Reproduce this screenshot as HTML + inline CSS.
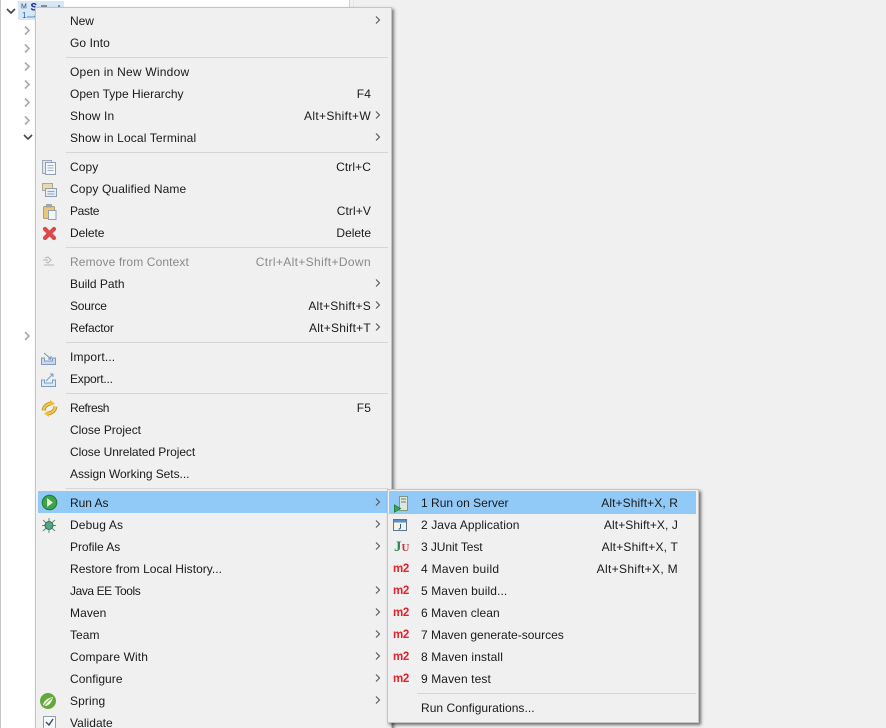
<!DOCTYPE html>
<html><head><meta charset="utf-8">
<style>
html,body{margin:0;padding:0;overflow:hidden}
body{width:886px;height:728px;position:relative;background:#f0f0f0;font-family:"Liberation Sans","Noto Sans CJK KR",sans-serif;font-size:12px;color:#1a1a1a}
div,svg{position:absolute}
.t{height:18px;line-height:18px;white-space:nowrap;letter-spacing:.08px}
.k{height:18px;line-height:18px;white-space:nowrap;text-align:right;letter-spacing:.33px}
.c{letter-spacing:.1px}
.sep{height:1px;background:#d5d5d5}
.m2{font:bold 11.5px/14px "Liberation Sans",sans-serif;color:#e8202a;left:393px;letter-spacing:-.4px}
</style></head><body>
<!-- tree panel -->
<div style="left:0;top:0;width:1px;height:728px;background:#c8c8c8"></div>
<div style="left:1px;top:0;width:348px;height:728px;background:#fff"></div>
<div style="left:349px;top:0;width:1px;height:728px;background:#d0d0d0"></div>
<div style="left:353px;top:0;width:1px;height:728px;background:#e4e4e4"></div>
<div style="left:18px;top:1px;width:46px;height:19px;background:#d5e8f8"></div>
<svg style="left:0;top:0" width="40" height="345" fill="none" stroke="#666" stroke-width="1.6">
<path d="M7 9l4 4 4-4" stroke="#444"/>
<path d="M25 26.500l4 4-4 4M25 44.500l4 4-4 4M25 62.500l4 4-4 4M25 80.500l4 4-4 4M25 98.500l4 4-4 4M25 116.500l4 4-4 4" stroke="#aaa"/>
<path d="M24 135l4 4 4-4" stroke="#444"/>
<path d="M25 332l4 4-4 4" stroke="#aaa"/>
</svg>
<svg style="left:20px;top:2px" width="42" height="18" fill="none">
<text x="1" y="6.500" font-size="7" font-family="Liberation Sans" fill="#345">M</text>
<text x="10.500" y="8.500" font-size="11" font-weight="bold" font-family="Liberation Mono" fill="#1a2aa0">S</text>
<text x="2" y="16" font-size="8" font-family="Liberation Sans" fill="#26a">1</text>
<path d="M7 15h7l2-2" stroke="#5a8abf"/>
<path d="M21 4h6M38 4h2" stroke="#333"/>
</svg>

<!-- main menu -->
<div style="left:35px;top:7px;width:355px;height:740px;background:#f0f0f0;border:1px solid #c4c4c4;box-shadow:2px 2px 3px rgba(0,0,0,.5)"></div>
<div style="left:38px;top:491px;width:350px;height:22px;background:#91c9f7"></div>

<div class="t" style="left:70px;top:12px;letter-spacing:-.05px">New</div>
<div class="t" style="left:70px;top:34px">Go Into</div>
<div class="sep" style="left:66px;top:57px;width:322px"></div>
<div class="t" style="left:70px;top:63px;letter-spacing:.22px">Open in New Window</div>
<div class="t" style="left:70px;top:85px;letter-spacing:.02px">Open Type Hierarchy</div>
<div class="t" style="left:70px;top:107px;letter-spacing:.14px">Show In</div>
<div class="t" style="left:70px;top:129px;letter-spacing:.14px">Show in Local Terminal</div>
<div class="sep" style="left:66px;top:152px;width:322px"></div>
<div class="t" style="left:70px;top:158px">Copy</div>
<div class="t" style="left:70px;top:180px;letter-spacing:.12px">Copy Qualified Name</div>
<div class="t" style="left:70px;top:202px;letter-spacing:-.32px">Paste</div>
<div class="t" style="left:70px;top:224px;letter-spacing:-.05px">Delete</div>
<div class="sep" style="left:66px;top:247px;width:322px"></div>
<div class="t" style="left:70px;top:253px;color:#8a8a8a;letter-spacing:.12px">Remove from Context</div>
<div class="t" style="left:70px;top:275px;letter-spacing:-.02px">Build Path</div>
<div class="t" style="left:70px;top:297px;letter-spacing:-.22px">Source</div>
<div class="t" style="left:70px;top:319px;letter-spacing:-.22px">Refactor</div>
<div class="sep" style="left:66px;top:342px;width:322px"></div>
<div class="t" style="left:70px;top:348px;letter-spacing:.14px">Import...</div>
<div class="t" style="left:70px;top:370px;letter-spacing:-.22px">Export...</div>
<div class="sep" style="left:66px;top:393px;width:322px"></div>
<div class="t" style="left:70px;top:399px;letter-spacing:-.43px">Refresh</div>
<div class="t" style="left:70px;top:421px;letter-spacing:-.03px">Close Project</div>
<div class="t" style="left:70px;top:443px;letter-spacing:-.07px">Close Unrelated Project</div>
<div class="t" style="left:70px;top:465px;letter-spacing:-.05px">Assign Working Sets...</div>
<div class="sep" style="left:66px;top:488px;width:322px"></div>
<div class="t" style="left:70px;top:494px;letter-spacing:-.05px">Run As</div>
<div class="t" style="left:70px;top:516px;letter-spacing:.14px">Debug As</div>
<div class="t" style="left:70px;top:538px;letter-spacing:-.05px">Profile As</div>
<div class="t" style="left:70px;top:560px;letter-spacing:.03px">Restore from Local History...</div>
<div class="t" style="left:70px;top:582px;letter-spacing:-.42px">Java EE Tools</div>
<div class="t" style="left:70px;top:604px">Maven</div>
<div class="t" style="left:70px;top:626px;letter-spacing:.03px">Team</div>
<div class="t" style="left:70px;top:648px;letter-spacing:.11px">Compare With</div>
<div class="t" style="left:70px;top:670px;letter-spacing:.06px">Configure</div>
<div class="t" style="left:70px;top:692px;letter-spacing:.1px">Spring</div>
<div class="t" style="left:70px;top:714px;letter-spacing:.03px">Validate</div>

<div class="k c" style="right:515px;top:85px">F4</div>
<div class="k" style="right:515px;top:107px">Alt+Shift+W</div>
<div class="k c" style="right:515px;top:158px">Ctrl+C</div>
<div class="k c" style="right:515px;top:202px">Ctrl+V</div>
<div class="k c" style="right:515px;top:224px;letter-spacing:-.02px">Delete</div>
<div class="k" style="right:515px;top:253px;color:#8a8a8a;letter-spacing:.36px">Ctrl+Alt+Shift+Down</div>
<div class="k" style="right:515px;top:297px;letter-spacing:.24px">Alt+Shift+S</div>
<div class="k" style="right:515px;top:319px;letter-spacing:.24px">Alt+Shift+T</div>
<div class="k c" style="right:515px;top:399px">F5</div>

<svg style="left:374px;top:0" width="10" height="728" fill="none" stroke="#555" stroke-width="1.1">
<path d="M2 16.500l3.500 3.500-3.500 3.500M2 111.500l3.500 3.500-3.500 3.500M2 133.500l3.500 3.500-3.500 3.500M2 279.500l3.500 3.500-3.500 3.500M2 301.500l3.500 3.500-3.500 3.500M2 323.500l3.500 3.500-3.500 3.500M2 498.500l3.500 3.500-3.500 3.500M2 520.500l3.500 3.500-3.500 3.500M2 542.500l3.500 3.500-3.500 3.500M2 586.500l3.500 3.500-3.500 3.500M2 608.500l3.500 3.500-3.500 3.500M2 630.500l3.500 3.500-3.500 3.500M2 652.500l3.500 3.500-3.500 3.500M2 674.500l3.500 3.500-3.500 3.500M2 696.500l3.500 3.500-3.500 3.500"/>
</svg>

<!-- main icons -->
<svg style="left:38px;top:155px" width="24" height="90" fill="none">
<rect x="4.500" y="5.500" width="9" height="13" fill="#dfe6ee" stroke="#9aa8b8"/>
<rect x="7.500" y="7.500" width="10" height="12" fill="#f4f7fa" stroke="#8fa0b3"/>
<path d="M9.500 10.500h6M9.500 13h6M9.500 15.500h6" stroke="#9ab0c7"/>
<rect x="4.500" y="28.500" width="10" height="7" fill="#e9d9ad" stroke="#b0a88e"/>
<rect x="7.500" y="33.500" width="11" height="8" fill="#e6edf5" stroke="#8fa0b3"/>
<path d="M9.500 36.500h7M9.500 39h7" stroke="#8fa6bf"/>
<rect x="5.500" y="51.500" width="11" height="12" rx="1" fill="#e9c77c" stroke="#b89c62"/>
<rect x="8" y="49" width="6" height="3.500" fill="#9aa7b5"/>
<rect x="10.500" y="55.500" width="7.500" height="9" fill="#f4f7fa" stroke="#8fa0b3"/>
<path d="M7 74l9 9M16 74l-9 9" stroke="#d94a4a" stroke-width="4.200" stroke-linecap="round"/>
</svg>
<svg style="left:40px;top:254px" width="20" height="16" fill="none" stroke="#b5b5b5">
<path d="M4 11h10M5 4l3-1 3 3-3 3-2-1M8 6H3"/>
</svg>
<svg style="left:40px;top:349px" width="20" height="38" fill="none" stroke="#7d9cc6">
<path d="M1.500 9v6.500h14V9h-3v3h-8V9z" fill="#c9d9ec"/>
<path d="M4 4l7 6M11 7v3H8" stroke="#7a8ea5"/>
<path d="M1.500 31v6.500h14V31h-3v3h-8v-3z" fill="#dfe8f3"/>
<path d="M6 32l7-7M10 25h3v3"/>
</svg>
<svg style="left:41px;top:400px" width="18" height="18" fill="none">
<path d="M2.500 10.500C3 6.500 6 4 10 3.500" stroke="#b98a1e" stroke-width="3.800"/>
<path d="M14.500 6.500C14 10.500 11 13 7 13.500" stroke="#b98a1e" stroke-width="3.800"/>
<path d="M2.500 10.500C3 6.500 6 4 10 3.500" stroke="#f2c848" stroke-width="2.200"/>
<path d="M14.500 6.500C14 10.500 11 13 7 13.500" stroke="#f2c848" stroke-width="2.200"/>
<path d="M9 0l5 3.500-5 3zM8 17l-5-3.500 5-3z" fill="#eebc3c"/>
</svg>
<svg style="left:40px;top:493px" width="20" height="20">
<circle cx="9.500" cy="9.500" r="7.300" fill="#3aa34b" stroke="#1d7a35"/>
<path d="M7 5l6 4.500-6 4.500z" fill="#e6f4d4"/>
</svg>
<svg style="left:41px;top:517px" width="18" height="17" fill="none" stroke="#5f8a7a">
<path d="M8 1v15M1 8.500h14M2 3l12 11M14 3L2 14"/>
<circle cx="8" cy="8.500" r="4" fill="#55a585" stroke="#2f6f59"/>
</svg>
<svg style="left:39px;top:692px" width="20" height="20">
<circle cx="9" cy="9" r="8" fill="#63a93a"/>
<path d="M4 13c1-5 5-7 10-8-1 5-4 9-8 9z" fill="#f3f8ea"/>
<path d="M5 14c2-3 4-5 8-8" stroke="#63a93a" fill="none"/>
</svg>
<svg style="left:43px;top:716px" width="14" height="13" fill="none">
<rect x=".5" y=".5" width="12" height="12" fill="#f6f8fb" stroke="#8fa0b3"/>
<path d="M3 6l3 3 4-6" stroke="#33506e" stroke-width="1.400"/>
</svg>

<!-- submenu -->
<div style="left:387px;top:489px;width:310px;height:232px;background:#f0f0f0;border:1px solid #c4c4c4;box-shadow:2px 2px 3px rgba(0,0,0,.55)"></div>
<div style="left:389px;top:491px;width:307px;height:23px;background:#91c9f7"></div>
<div class="sep" style="left:417px;top:693px;width:279px"></div>

<div class="t" style="left:421px;top:494px;letter-spacing:.01px">1 Run on Server</div>
<div class="t" style="left:421px;top:516px;letter-spacing:.1px">2 Java Application</div>
<div class="t" style="left:421px;top:538px;letter-spacing:-.08px">3 JUnit Test</div>
<div class="t" style="left:421px;top:560px;letter-spacing:.28px">4 Maven build</div>
<div class="t" style="left:421px;top:582px;letter-spacing:.1px">5 Maven build...</div>
<div class="t" style="left:421px;top:604px;letter-spacing:.05px">6 Maven clean</div>
<div class="t" style="left:421px;top:626px;letter-spacing:0">7 Maven generate-sources</div>
<div class="t" style="left:421px;top:648px;letter-spacing:.13px">8 Maven install</div>
<div class="t" style="left:421px;top:670px;letter-spacing:.1px">9 Maven test</div>
<div class="t" style="left:421px;top:699px;letter-spacing:.04px">Run Configurations...</div>

<div class="k" style="right:208px;top:494px;letter-spacing:.1px">Alt+Shift+X, R</div>
<div class="k" style="right:208px;top:516px;letter-spacing:.1px">Alt+Shift+X, J</div>
<div class="k" style="right:208px;top:538px;letter-spacing:.18px">Alt+Shift+X, T</div>
<div class="k" style="right:208px;top:560px">Alt+Shift+X, M</div>

<svg style="left:393px;top:495px" width="18" height="18" fill="none">
<rect x="6.500" y="1.500" width="8" height="14" fill="#dfe7dc" stroke="#7d9a7e"/>
<path d="M8 4h5M8 7h5" stroke="#5c8a62"/>
<path d="M1.500 10l6 3.500-6 3.500z" fill="#3aa655" stroke="#23803b"/>
</svg>
<svg style="left:393px;top:518px" width="16" height="16" fill="none">
<rect x=".5" y="1.500" width="13" height="11" fill="#f8f4e4" stroke="#5a7896"/>
<rect x="1" y="2" width="12" height="2.500" fill="#5b8fc7"/>
<path d="M7.500 6v4l-1 1h-1" stroke="#2b5a8a"/>
</svg>
<div style="left:394px;top:539px;font:bold 15px/16px 'Liberation Serif',serif;color:#2d8a55">J<span style="color:#c0393f;font-size:11px">U</span></div>
<div class="m2" style="top:562px">m2</div>
<div class="m2" style="top:584px">m2</div>
<div class="m2" style="top:606px">m2</div>
<div class="m2" style="top:628px">m2</div>
<div class="m2" style="top:650px">m2</div>
<div class="m2" style="top:672px">m2</div>
</body></html>
